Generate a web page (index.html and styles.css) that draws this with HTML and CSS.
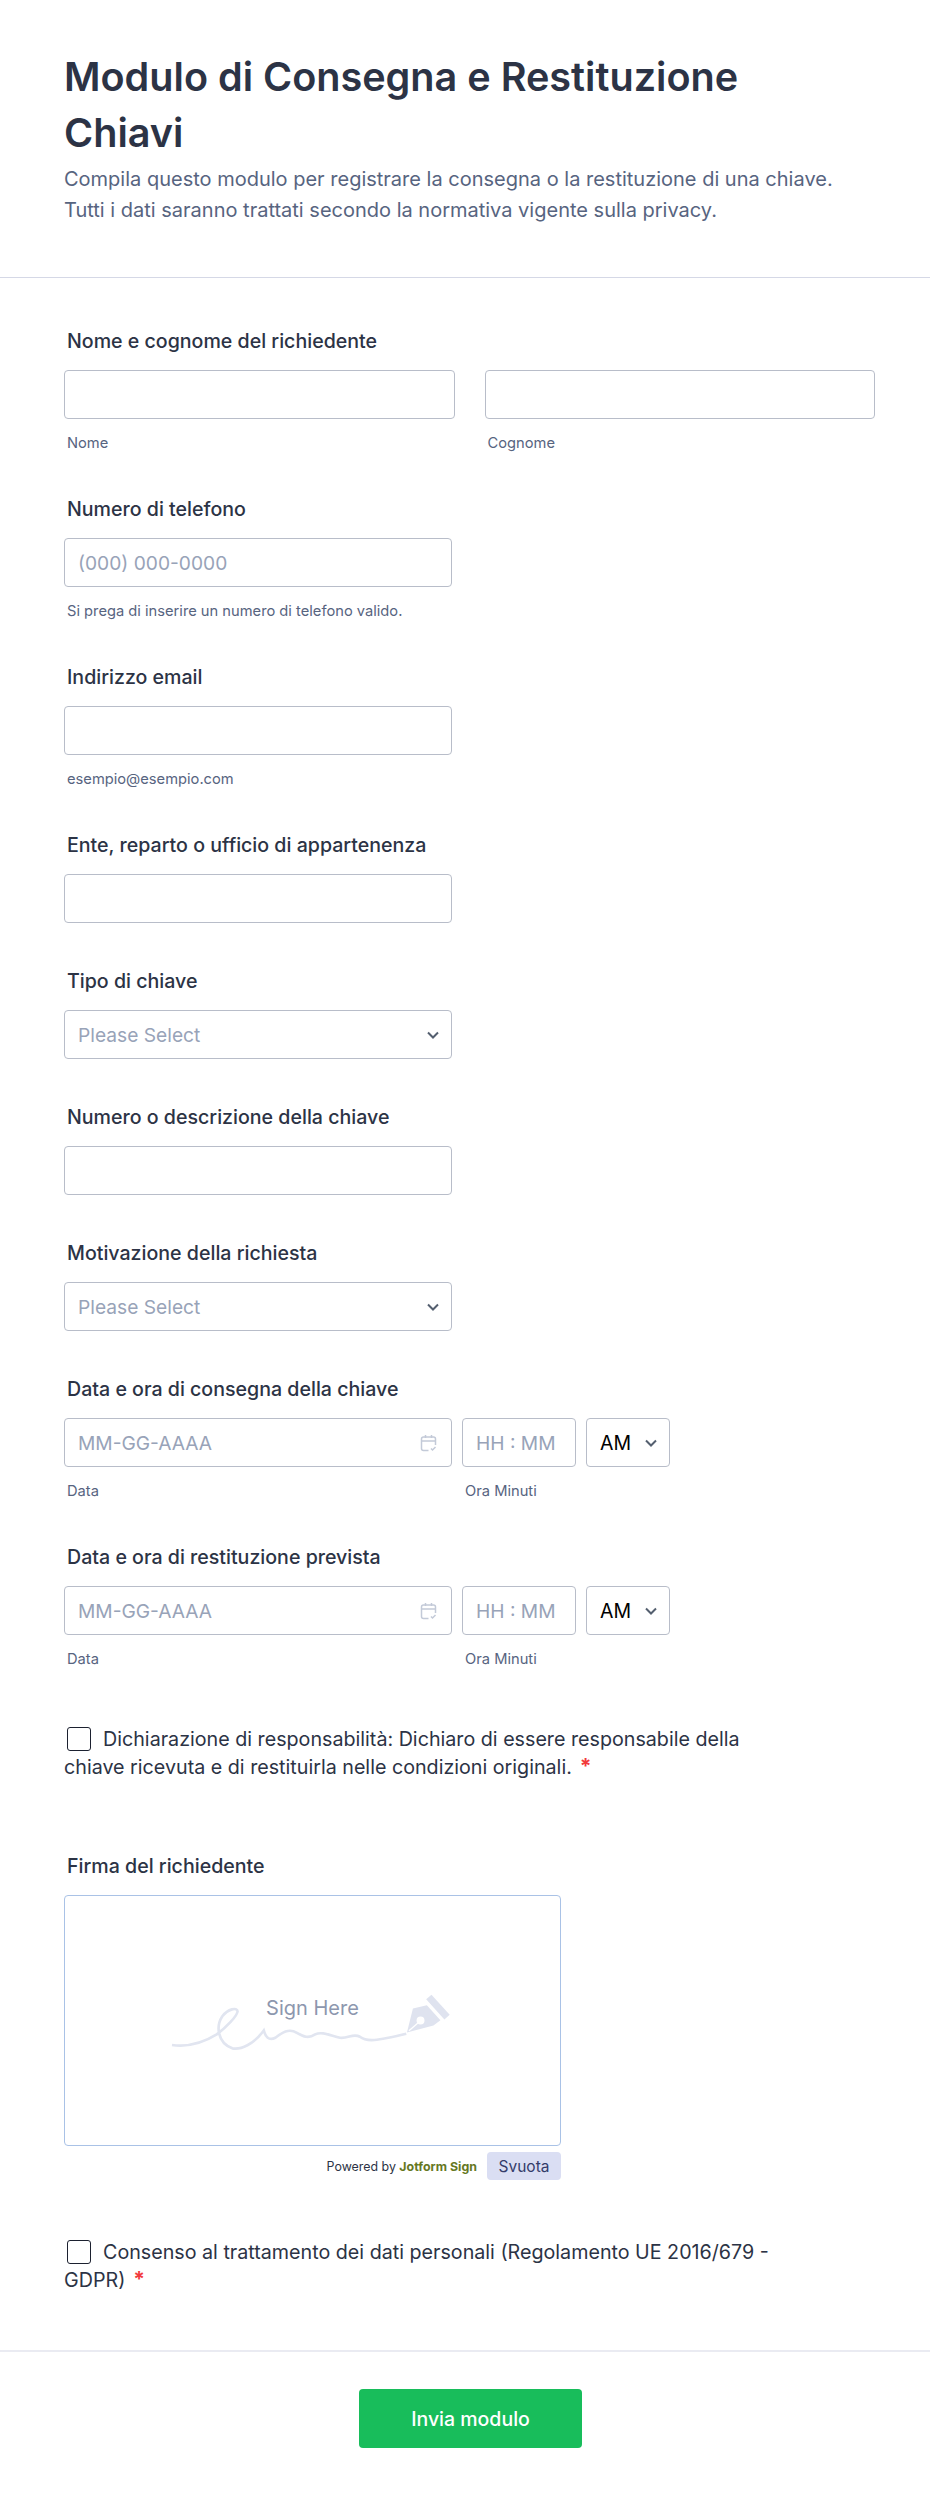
FILE: index.html
```html
<!DOCTYPE html>
<html lang="it">
<head>
<meta charset="utf-8">
<title>Modulo di Consegna e Restituzione Chiavi</title>
<link rel="stylesheet" href="styles.css">
</head>
<body>
<header class="head">
  <h1>Modulo di Consegna e Restituzione Chiavi</h1>
  <p>Compila questo modulo per registrare la consegna o la restituzione di una chiave. Tutti i dati saranno trattati secondo la normativa vigente sulla privacy.</p>
</header>
<main class="form">
  <section class="field">
    <div class="label">Nome e cognome del richiedente</div>
    <div class="row name-row">
      <div class="col"><div class="box"></div><div class="sub">Nome</div></div>
      <div class="col"><div class="box"></div><div class="sub">Cognome</div></div>
    </div>
  </section>
  <section class="field">
    <div class="label">Numero di telefono</div>
    <div class="box w388"><span class="ph">(000) 000-0000</span></div>
    <div class="sub">Si prega di inserire un numero di telefono valido.</div>
  </section>
  <section class="field">
    <div class="label">Indirizzo email</div>
    <div class="box w388"></div>
    <div class="sub">esempio@esempio.com</div>
  </section>
  <section class="field">
    <div class="label">Ente, reparto o ufficio di appartenenza</div>
    <div class="box w388"></div>
  </section>
  <section class="field">
    <div class="label">Tipo di chiave</div>
    <div class="box w388 between"><span class="ph">Please Select</span>
      <svg class="chev" viewBox="0 0 12 8"><path d="M1 1.500 6 6.500l5-5"/></svg></div>
  </section>
  <section class="field">
    <div class="label">Numero o descrizione della chiave</div>
    <div class="box w388"></div>
  </section>
  <section class="field">
    <div class="label">Motivazione della richiesta</div>
    <div class="box w388 between"><span class="ph">Please Select</span>
      <svg class="chev" viewBox="0 0 12 8"><path d="M1 1.500 6 6.500l5-5"/></svg></div>
  </section>
  <section class="field">
    <div class="label">Data e ora di consegna della chiave</div>
    <div class="row dt-row">
      <div class="w388"><div class="box between"><span class="ph">MM-GG-AAAA</span>
        <svg class="cal" viewBox="0 0 16 18"><path d="M5 1v3M11 1v3M1 7h14M8 16.500H3a2 2 0 0 1-2-2V5a2 2 0 0 1 2-2h10a2 2 0 0 1 2 2v6"/><path d="m10.500 14.500 1.500 1.500 3-3"/></svg></div><div class="sub">Data</div></div>
      <div class="time"><div class="box"><span class="ph">HH : MM</span></div><div class="sub">Ora Minuti</div></div>
      <div class="box ampm between"><span>AM</span><svg class="chev" viewBox="0 0 12 8"><path d="M1 1.500 6 6.500l5-5"/></svg></div>
    </div>
  </section>
  <section class="field">
    <div class="label">Data e ora di restituzione prevista</div>
    <div class="row dt-row">
      <div class="w388"><div class="box between"><span class="ph">MM-GG-AAAA</span>
        <svg class="cal" viewBox="0 0 16 18"><path d="M5 1v3M11 1v3M1 7h14M8 16.500H3a2 2 0 0 1-2-2V5a2 2 0 0 1 2-2h10a2 2 0 0 1 2 2v6"/><path d="m10.500 14.500 1.500 1.500 3-3"/></svg></div><div class="sub">Data</div></div>
      <div class="time"><div class="box"><span class="ph">HH : MM</span></div><div class="sub">Ora Minuti</div></div>
      <div class="box ampm between"><span>AM</span><svg class="chev" viewBox="0 0 12 8"><path d="M1 1.500 6 6.500l5-5"/></svg></div>
    </div>
  </section>
  <section class="check check-first">
    <span class="tick"></span>Dichiarazione di responsabilità: Dichiaro di essere responsabile della chiave ricevuta e di restituirla nelle condizioni originali.<span class="req">*</span>
  </section>
  <section class="sign-field">
    <div class="label">Firma del richiedente</div>
    <div class="pad">
      <div class="sign-here">Sign Here</div>
      <svg class="scribble" viewBox="90 130 845 175">
        <path class="line" d="M93 287C130 292 180 285 228 255 255 235 290 200 291 185 290 172 262 178 245 200 225 230 230 280 275 297 300 302 340 285 370 243 375 262 385 275 405 265 425 250 445 235 470 250 490 262 505 268 525 255 545 245 570 258 600 265 625 268 640 250 660 262 680 278 710 275 800 253"/>
        <path class="nib" fill-rule="evenodd" d="M802 249 820 177 862 167 903 212 882 228ZM843 201A12 12 0 1 0 843 225 12 12 0 1 0 843 201Z"/>
        <path class="slit" d="M808 244 836 220"/>
        <path class="nib" d="M876 135 931 196 915 210 860 149Z"/>
      </svg>
    </div>
    <div class="sign-foot">
      <span class="powered">Powered by <b>Jotform Sign</b></span>
      <span class="clear">Svuota</span>
    </div>
  </section>
  <section class="check check-last">
    <span class="tick"></span>Consenso al trattamento dei dati personali (Regolamento UE 2016/679 - GDPR)<span class="req">*</span>
  </section>
</main>
<footer class="foot"><button class="send" type="button">Invia modulo</button></footer>
</body>
</html>
```

FILE: styles.css
```css
* { box-sizing: border-box; }
html, body { margin: 0; background: #fff; }
body { position: relative; font-family: Inter, "Liberation Sans", sans-serif; color: #2c3345; width: 930px; height: 2498px; overflow: hidden; }
.head { padding: 49px 64px 0; border-bottom: 1px solid #d5d8e6; height: 278px; }
.head h1 { margin: 0 0 3px; font-size: 39.600px; line-height: 56px; font-weight: 600; color: #2c3345; max-width: 720px; }
.head p { margin: 0; font-size: 20px; line-height: 31px; color: #57647f; max-width: 800px; }
.form { padding: 50px 64px 0; }
.field { margin-bottom: 45px; }
.label { font-size: 19.600px; line-height: 26px; font-weight: 500; color: #2c3345; padding-left: 3px; margin-bottom: 16px; }
.row { display: flex; }
.name-row { gap: 30px; width: 811px; }
.col { flex: 1; }
.dt-row { gap: 10px; align-items: flex-start; }
.w388 { width: 388px; }
.time { width: 114px; }
.box { height: 49px; border: 1px solid #b8bdc9; border-radius: 4px; background: #fff; padding: 0 12px 0 13px; display: flex; align-items: center; font-size: 19.500px; }
.between { justify-content: space-between; }
.ampm { width: 84px; color: #000; }
.ph { color: #98a3b8; font-size: 19.200px; }
.sub { font-size: 14.700px; line-height: 16px; color: #57647f; padding: 16px 0 0 3px; }
.chev { width: 12px; height: 8px; fill: none; stroke: #545f6f; stroke-width: 2; }
.cal { width: 17px; height: 18px; margin-right: 2px; fill: none; stroke: #c3cad8; stroke-width: 1.500; }
.check { font-size: 19.700px; line-height: 28px; color: #2c3345; }
.check-first { width: 720px; padding-top: 13px; }
.check-last { width: 760px; }
.tick { display: inline-block; width: 24px; height: 24px; border: 1.500px solid #1c2130; border-radius: 3px; vertical-align: -5px; margin: 0 12px 0 3px; }
.req { color: #f23a3c; font-weight: 700; font-size: 21px; margin-left: 8px; }
.sign-field { margin-top: 72px; width: 497px; }
.pad { position: relative; height: 251px; border: 1px solid #a9c2e6; border-radius: 4px; }
.sign-here { position: absolute; top: 100px; left: 0; width: 100%; text-align: center; font-size: 20px; line-height: 24px; color: #8d97ae; }
.scribble { position: absolute; left: 105px; top: 97px; width: 282px; height: 58px; fill: none; }
.scribble .line { stroke: #e1e5f0; stroke-width: 8; }
.scribble .nib { fill: #dfe3ef; }
.scribble .slit { stroke: #fff; stroke-width: 4; }
.sign-foot { display: flex; justify-content: flex-end; align-items: center; gap: 10px; margin-top: 6px; margin-bottom: 58px; }
.powered { font-size: 12.400px; color: #2c3345; }
.powered b { color: #66781f; font-weight: 700; }
.clear { width: 74px; height: 28px; background: #dadef3; border-radius: 4px; color: #343c6a; font-size: 15.500px; display: flex; align-items: center; justify-content: center; }
.foot { position: absolute; top: 2350px; left: 0; width: 930px; height: 148px; border-top: 2px solid #eaebf2; display: flex; justify-content: center; align-items: flex-start; padding-top: 37px; padding-left: 11px; }
.send { width: 223px; height: 59px; border: 0; border-radius: 4px; background: #18bd5b; color: #fff; font: 500 19.500px Inter, sans-serif; }
```
